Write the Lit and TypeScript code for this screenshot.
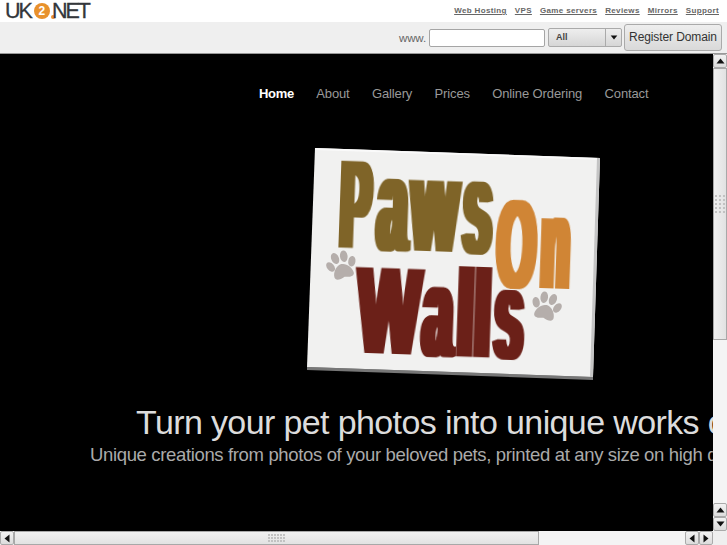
import { LitElement, html, css, svg } from "lit";
import { customElement } from "lit/decorators.js";

const paw = (x: number, y: number, r: number) => svg`
  <g transform="translate(${x} ${y}) rotate(${r})" fill="#b5aeab">
    <ellipse cx="-11" cy="-3" rx="3.6" ry="5.4" transform="rotate(-25 -11 -3)"/>
    <ellipse cx="-4.5" cy="-10" rx="3.8" ry="5.8" transform="rotate(-8 -4.5 -10)"/>
    <ellipse cx="4.5" cy="-10" rx="3.8" ry="5.8" transform="rotate(8 4.5 -10)"/>
    <ellipse cx="11" cy="-3" rx="3.6" ry="5.4" transform="rotate(25 11 -3)"/>
    <path d="M0 -3 C5 -3 10 3 10 8 C10 12 5 12 0 10 C-5 12 -10 12 -10 8 C-10 3 -5 -3 0 -3Z"/>
  </g>`;

/* one run of condensed lettering: x, baseline, font size, target width */
const run = (t: string, x: number, y: number, size: number, len: number) => svg`
  <text x=${x} y=${y} font-size=${size} textLength=${len} lengthAdjust="spacingAndGlyphs">${t}</text>`;

const up = html`<svg class="arr" viewBox="0 0 9 6"><path d="M4.5 0.5 L8.5 5.5 H0.5Z"/></svg>`;
const down = html`<svg class="arr" viewBox="0 0 9 6"><path d="M4.5 5.5 L8.5 0.5 H0.5Z"/></svg>`;
const left = html`<svg class="arr lr" viewBox="0 0 6 9"><path d="M0.5 4.5 L5.5 0.5 V8.5Z"/></svg>`;
const right = html`<svg class="arr lr" viewBox="0 0 6 9"><path d="M5.5 4.5 L0.5 0.5 V8.5Z"/></svg>`;

@customElement("app-root")
export class AppRoot extends LitElement {
  static styles = css`
    :host {
      display: flex;
      flex-direction: column;
      width: 727px;
      height: 545px;
      overflow: hidden;
      background: #fff;
      font-family: "Liberation Sans", Arial, sans-serif;
    }
    .top {
      height: 22px;
      display: flex;
      justify-content: space-between;
      background: #fff;
      flex: none;
    }
    .logo {
      display: flex;
      align-items: center;
      margin-left: 5px;
      height: 22px;
      font-size: 21.5px;
      letter-spacing: -2px;
      color: #33373b;
      -webkit-text-stroke: 0.3px #33373b;
    }
    .two {
      width: 16px;
      height: 16px;
      border-radius: 50%;
      background: #e8912c;
      color: #fff;
      -webkit-text-stroke: 0;
      font-size: 12px;
      font-weight: bold;
      letter-spacing: 0;
      line-height: 16px;
      text-align: center;
      margin: 0 0 0 3px;
    }
    .dot {
      width: 4px;
      height: 4px;
      background: #e8912c;
      border-radius: 50%;
      align-self: flex-end;
      margin: 0 -3px 3px 1px;
    }
    .links {
      display: flex;
      gap: 8px;
      padding: 5px 8px 0 0;
      font-size: 8px;
      font-weight: bold;
      letter-spacing: 0.36px;
      line-height: 11px;
      color: #666;
    }
    .links span { text-decoration: underline; }
    .bar {
      height: 32px;
      flex: none;
      box-sizing: border-box;
      background: #efefef;
      border-bottom: 1px solid #999;
      display: flex;
      align-items: center;
      justify-content: flex-end;
      padding: 0 5px 0 0;
    }
    .www { font-size: 11.5px; letter-spacing: -0.1px; color: #666; margin-right: 3px; }
    .input {
      width: 116px;
      height: 18px;
      box-sizing: border-box;
      background: #fff;
      border: 1px solid #a5a5a5;
      border-radius: 2px;
      margin-right: 3px;
    }
    .select {
      width: 74px;
      height: 19px;
      box-sizing: border-box;
      border: 1px solid #aaa;
      border-radius: 2px;
      background: linear-gradient(#eee, #d6d6d6);
      display: flex;
      font-size: 9px;
      font-weight: bold;
      color: #444;
      margin-right: 2px;
    }
    .select .v { flex: 1; padding-left: 7px; line-height: 17px; }
    .select .b {
      width: 15px;
      border-left: 1px solid #aaa;
      display: flex;
      align-items: center;
      justify-content: center;
    }
    .select .arr { width: 8px; height: 5px; }
    .btn {
      width: 98px;
      height: 27px;
      box-sizing: border-box;
      border: 1px solid #aaa;
      border-radius: 3px;
      background: linear-gradient(#eee, #d9d9d9);
      font-size: 12px;
      letter-spacing: -0.1px;
      white-space: nowrap;
      color: #333;
      text-align: center;
      line-height: 25px;
    }
    .mid { flex: 1; display: flex; min-height: 0; }
    .view {
      flex: 1;
      min-width: 0;
      background: #000;
      overflow: hidden;
      white-space: nowrap;
    }
    nav {
      display: flex;
      gap: 22.3px;
      margin: 32px 0 0 259px;
      font-size: 13px;
      letter-spacing: -0.12px;
      line-height: 16px;
      color: #999;
    }
    nav .on { color: #fff; font-weight: bold; letter-spacing: -0.3px; }
    .poster { display: block; margin: 38px 0 0 300px; width: 310px; height: 245px; }
    .h1 {
      margin: 18px 0 0 136px;
      font-size: 34px;
      letter-spacing: -0.62px;
      line-height: 38px;
      color: #dcdcdc;
    }
    .h2 {
      margin: 3px 0 0 90px;
      font-size: 18.5px;
      letter-spacing: -0.35px;
      line-height: 22px;
      color: #aaa;
    }
    .arr { display: block; width: 9px; height: 6px; fill: #111; }
    .arr.lr { width: 6px; height: 9px; }
    .vs {
      width: 14px;
      flex: none;
      box-sizing: border-box;
      display: flex;
      flex-direction: column;
      background: #f4f4f4;
    }
    .sb {
      flex: none;
      width: 14px;
      height: 14px;
      box-sizing: border-box;
      display: flex;
      align-items: center;
      justify-content: center;
      background: linear-gradient(#f2f2f2, #dcdcdc);
      border: 1px solid #aaa;
      border-radius: 2px;
    }
    .thumb {
      flex: none;
      background: linear-gradient(90deg, #f0f0f0, #e2e2e2);
      border: 1px solid #a8a8a8;
      box-sizing: border-box;
      display: flex;
      justify-content: center;
    }
    .vs .thumb { height: 272px; padding-top: 126px; }
    .track { flex: 1; }
    .grip {
      display: grid;
      grid-template-columns: repeat(4, 2px);
      gap: 2px;
    }
    .grip i { width: 2px; height: 2px; background: #c2c2c2; }
    .vs .grip { grid-template-columns: repeat(3, 2px); align-self: flex-start; }
    .hs {
      height: 14px;
      flex: none;
      display: flex;
      box-sizing: border-box;
      background: #f4f4f4;
    }
    .hs .thumb { width: 525px; background: linear-gradient(#f0f0f0, #e2e2e2); align-items: center; }
    .hs .grip { grid-template-columns: repeat(6, 2px); gap: 1px; }
    .corner { width: 14px; flex: none; background: #efefef; }
  `;

  private grip(n: number) {
    return html`<div class="grip">${Array.from({ length: n }, () => html`<i></i>`)}</div>`;
  }

  render() {
    return html`
      <div class="top">
        <div class="logo">UK<span class="two">2</span><span class="dot"></span>NET</div>
        <div class="links">
          <span>Web Hosting</span><span>VPS</span><span>Game servers</span>
          <span>Reviews</span><span>Mirrors</span><span>Support</span>
        </div>
      </div>
      <div class="bar">
        <span class="www">www.</span>
        <div class="input"></div>
        <div class="select"><span class="v">All</span><span class="b">${down}</span></div>
        <div class="btn">Register Domain</div>
      </div>
      <div class="mid">
        <div class="view">
          <nav>
            <span class="on">Home</span><span>About</span><span>Gallery</span>
            <span>Prices</span><span>Online Ordering</span><span>Contact</span>
          </nav>
          <svg class="poster" viewBox="0 0 310 245">
            <defs>
              <filter id="fat" x="-5%" y="-5%" width="110%" height="110%" color-interpolation-filters="sRGB">
                <feMorphology operator="dilate" radius="3.5 0"/>
              </filter>
            </defs>
            <polygon points="7,227 293,237 293,240 7,230" fill="#777"/>
            <polygon points="15,8 300,18 293,237 7,227" fill="#f1f1f0"/>
            <polygon points="15,8 300,18 300,20 15,10" fill="#fafafa"/>
            <polygon points="297,18 300,18 293,237 290,237" fill="#c4c4c4"/>
            ${paw(42, 127, -15)}
            ${paw(246, 168, 15)}
            <g transform="rotate(2 155 120)" font-family="Liberation Sans" font-weight="bold">
              <g fill="#7f6428" filter="url(#fat)">
                ${run("P", 39, 112, 126, 30)}
                ${run("a", 76, 113, 134, 30)}
                ${run("w", 110, 112, 134, 46)}
                ${run("s", 162, 113, 134, 28)}
              </g>
              <g fill="#d08535" filter="url(#fat)">
                ${run("O", 197, 146, 126, 38)}
                ${run("n", 241, 145, 132, 28)}
              </g>
              <g fill="#6b2018" filter="url(#fat)">
                ${run("W", 60, 216, 124, 62)}
                ${run("a", 125, 217, 128, 30)}
                ${run("ll", 159, 216, 124, 34)}
                ${run("s", 197, 217, 128, 28)}
              </g>
            </g>
          </svg>
          <div class="h1">Turn your pet photos into unique works of art</div>
          <div class="h2">Unique creations from photos of your beloved pets, printed at any size on high quality canvas</div>
        </div>
        <div class="vs">
          <div class="sb">${up}</div>
          <div class="thumb">${this.grip(15)}</div>
          <div class="track"></div>
          <div class="sb">${up}</div>
          <div class="sb">${down}</div>
        </div>
      </div>
      <div class="hs">
        <div class="sb">${left}</div>
        <div class="thumb">${this.grip(18)}</div>
        <div class="track"></div>
        <div class="sb">${left}</div>
        <div class="sb">${right}</div>
        <div class="corner"></div>
      </div>
    `;
  }
}
